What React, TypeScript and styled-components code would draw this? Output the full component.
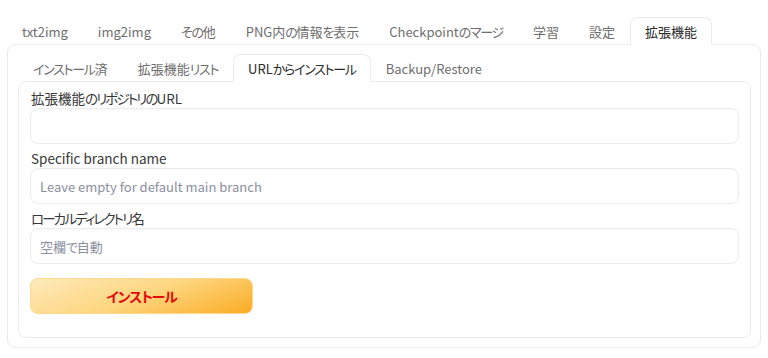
import React from "react";
import styled, { createGlobalStyle, css } from "styled-components";

const Global = createGlobalStyle`
  html, body { margin: 0; padding: 0; background: #ffffff; }
  body {
    font-family: "Noto Sans CJK JP", "Noto Sans", sans-serif;
    font-size: 13px;
    color: #333;
    font-feature-settings: "palt" 1;
  }
  * { box-sizing: border-box; }
`;

const Kana = styled.span`
  letter-spacing: -0.1em;
`;

function jp(text: string) {
  return text.split(/([\u3040-\u30ff]+)/).map((part, i) =>
    /^[\u3040-\u30ff]+$/.test(part) ? <Kana key={i}>{part}</Kana> : part
  );
}

const Page = styled.div`
  padding: 17px 7px 0 7px;
  width: 768px;
  height: 358px;
`;

const TabBar = styled.div`
  display: flex;
  align-items: flex-end;
  height: 27px;
`;

const Tab = styled.div<{ $active?: boolean }>`
  height: 27px;
  padding: 0 14px;
  display: flex;
  align-items: center;
  font-size: 13px;
  color: #6e6e6e;
  white-space: nowrap;
  border: 1px solid transparent;
  border-bottom: none;
  border-radius: 8px 8px 0 0;
  ${(p) =>
    p.$active &&
    css`
      color: #2a2a2a;
      background: #fff;
      border-color: #ececec;
      margin-bottom: -1px;
      height: 28px;
      position: relative;
      z-index: 1;
    `}
`;

const Panel = styled.div<{ $inner?: boolean }>`
  border: 1px solid #ececec;
  border-radius: 8px;
  background: #fff;
  padding: ${(p) => (p.$inner ? "8px 11px 22px 11px" : "9px 10px 9px 10px")};
  height: ${(p) => (p.$inner ? "257px" : "304px")};
  width: ${(p) => (p.$inner ? "733px" : "754px")};
`;

const Form = styled.div`
  display: flex;
  flex-direction: column;
  gap: 6px;
`;

const Field = styled.div`
  display: flex;
  flex-direction: column;
  gap: 2px;
`;

const Label = styled.div`
  font-size: 13.5px;
  line-height: 16px;
  color: #373737;
  padding-left: 1px;
  ${Kana} {
    letter-spacing: -0.14em;
  }
`;

const Input = styled.div`
  height: 36px;
  width: 709px;
  border: 1px solid #ececec;
  border-radius: 8px;
  box-shadow: inset 0 1px 2px rgba(0, 0, 0, 0.03), 0 0 1px rgba(0, 0, 0, 0.02);
  padding: 0 9px;
  display: flex;
  align-items: center;
  font-size: 13px;
  color: #8b8fa0;
`;

const Button = styled.button`
  margin-top: 8px;
  width: 223px;
  height: 36px;
  border: 1px solid #fcd98f;
  border-radius: 8px;
  background: linear-gradient(160deg, #feeabb 0%, #fdd680 50%, #fbac24 100%);
  color: #e50a0a;
  font-family: "Noto Sans CJK JP", sans-serif;
  font-feature-settings: "palt" 1;
  font-weight: 700;
  font-size: 14px;
  display: flex;
  align-items: center;
  justify-content: center;
  padding: 0;
  ${Kana} {
    letter-spacing: -0.08em;
  }
`;

export default function App() {
  const outerTabs = [
    "txt2img",
    "img2img",
    "その他",
    "PNG内の情報を表示",
    "Checkpointのマージ",
    "学習",
    "設定",
    "拡張機能",
  ];
  const innerTabs = ["インストール済", "拡張機能リスト", "URLからインストール", "Backup/Restore"];
  return (
    <>
      <Global />
      <Page>
        <TabBar>
          {outerTabs.map((t) => (
            <Tab key={t} $active={t === "拡張機能"}>
              {jp(t)}
            </Tab>
          ))}
        </TabBar>
        <Panel>
          <TabBar>
            {innerTabs.map((t) => (
              <Tab key={t} $active={t === "URLからインストール"}>
                {jp(t)}
              </Tab>
            ))}
          </TabBar>
          <Panel $inner>
            <Form>
              <Field>
                <Label>{jp("拡張機能のリポジトリのURL")}</Label>
                <Input />
              </Field>
              <Field>
                <Label>Specific branch name</Label>
                <Input>Leave empty for default main branch</Input>
              </Field>
              <Field>
                <Label>{jp("ローカルディレクトリ名")}</Label>
                <Input>{jp("空欄で自動")}</Input>
              </Field>
              <Button>{jp("インストール")}</Button>
            </Form>
          </Panel>
        </Panel>
      </Page>
    </>
  );
}
